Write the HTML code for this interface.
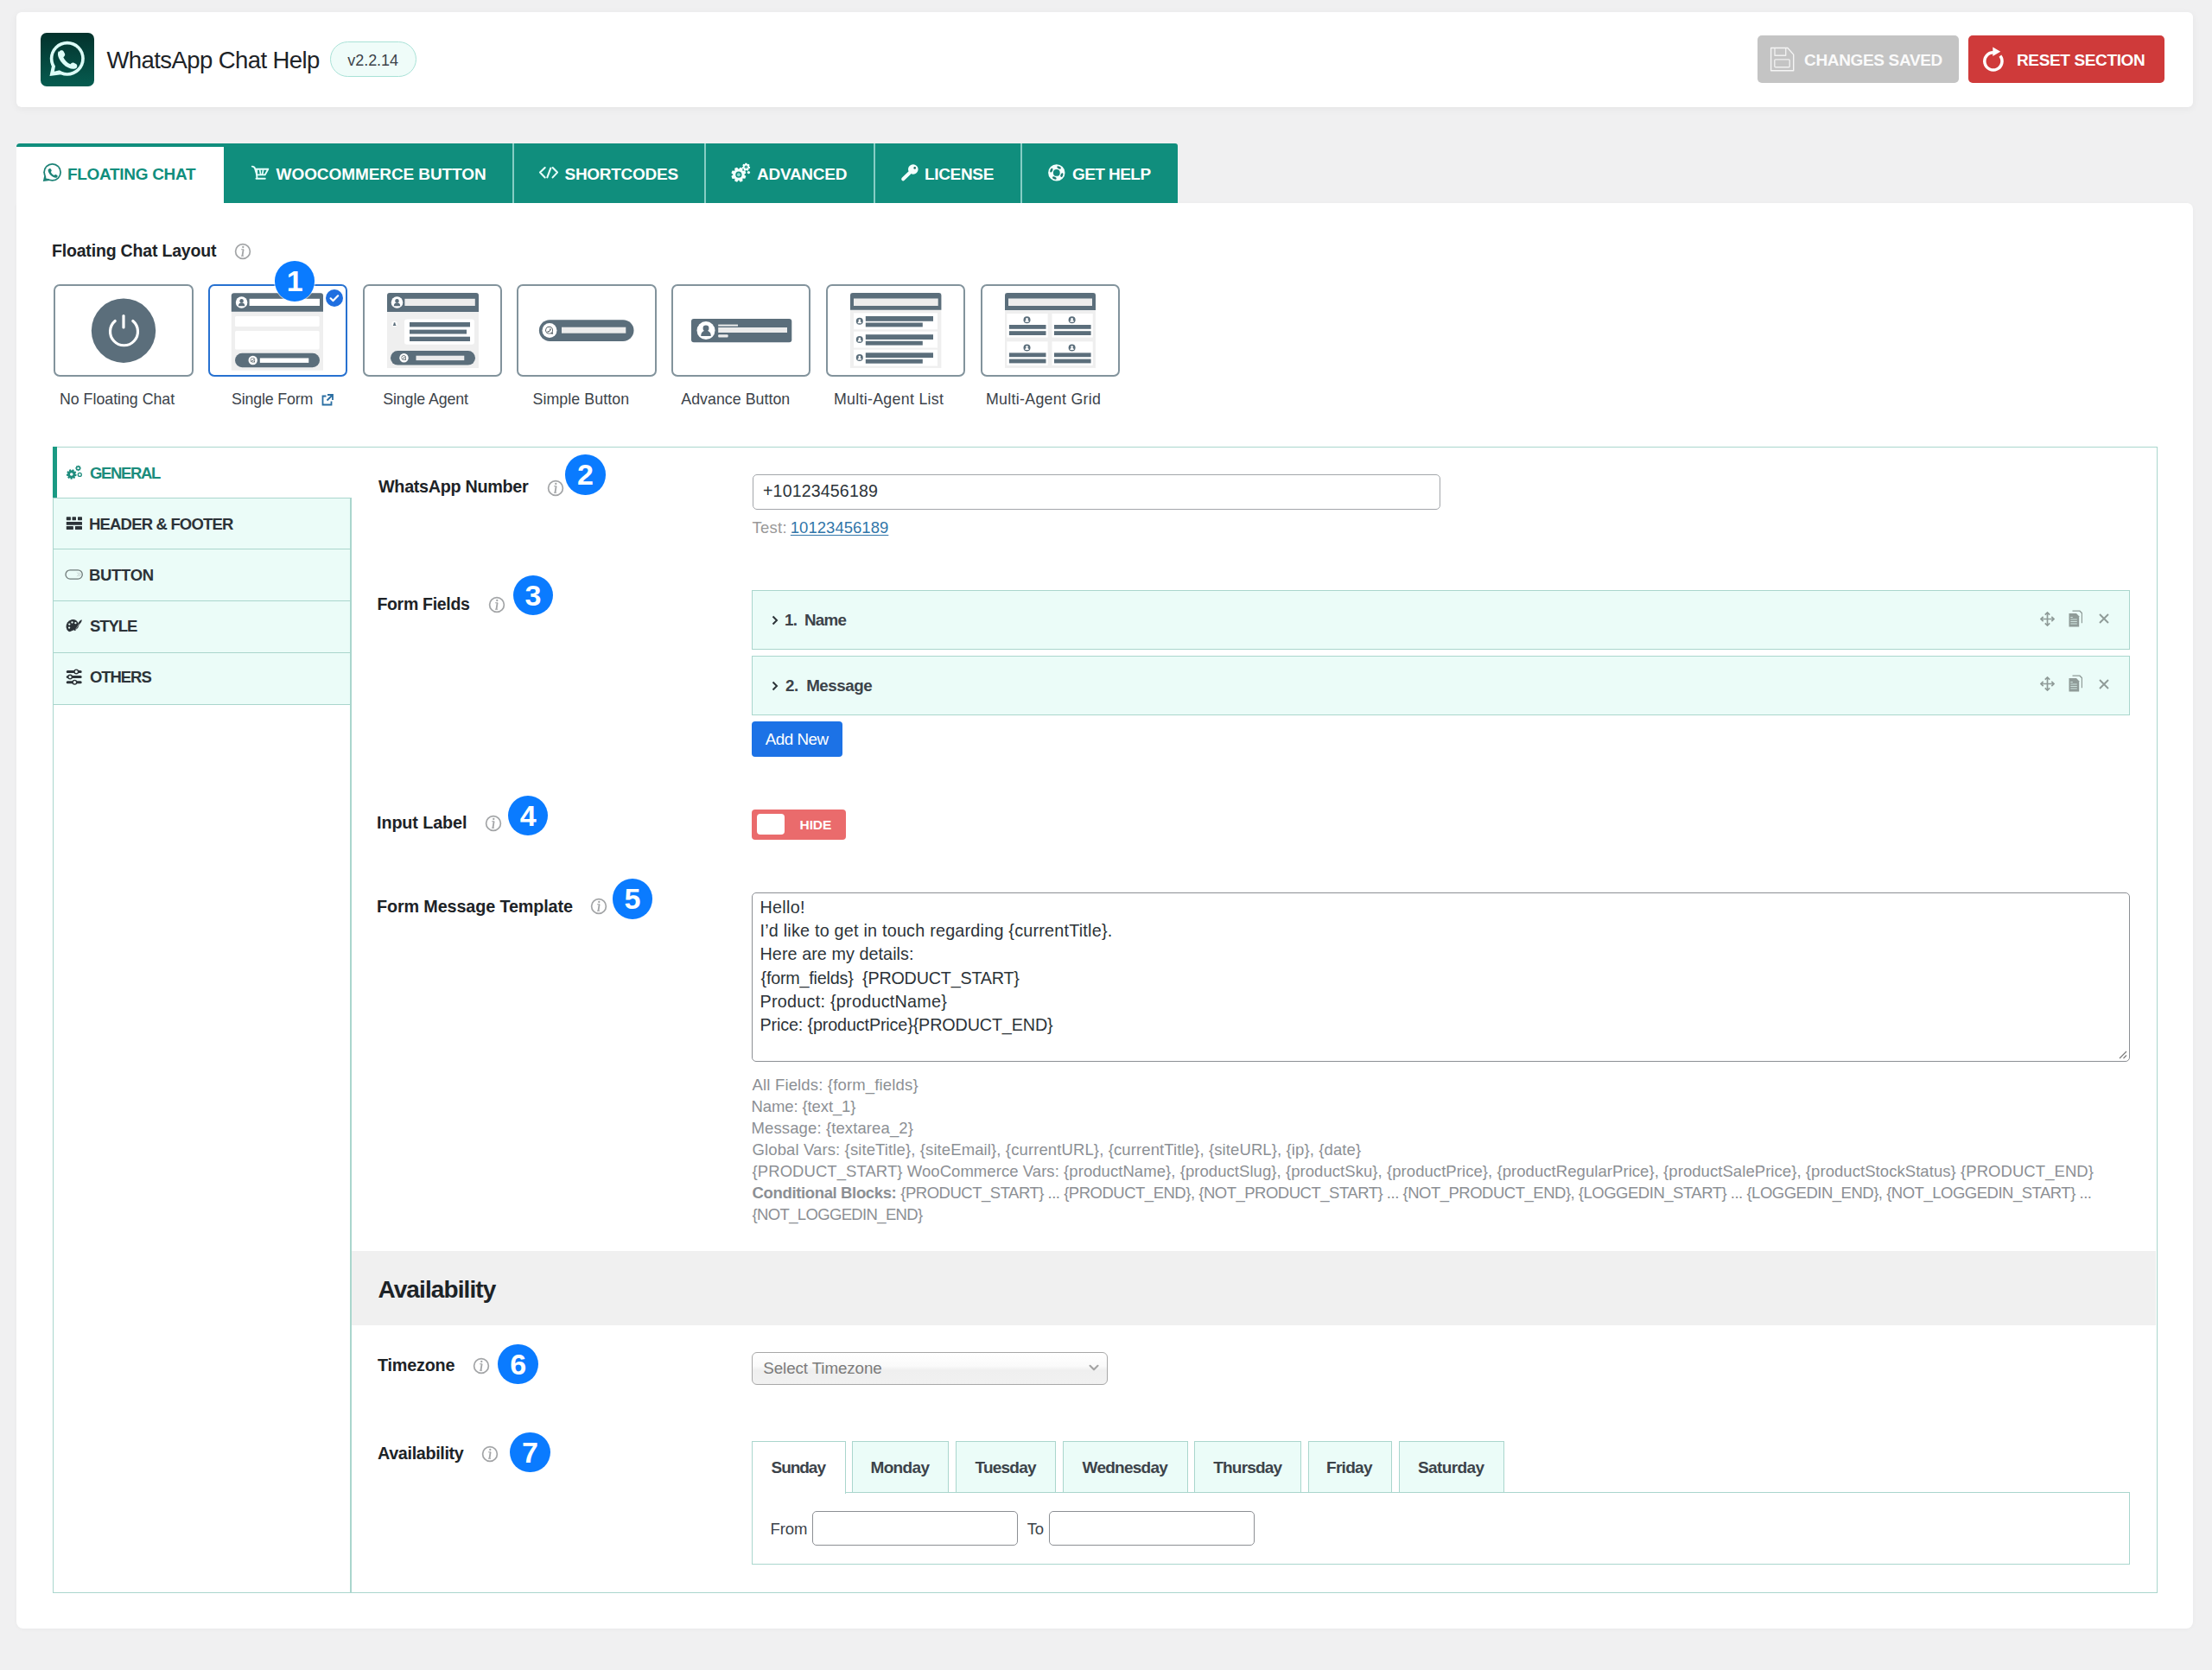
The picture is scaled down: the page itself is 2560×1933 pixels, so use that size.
<!DOCTYPE html><html><head><meta charset="utf-8"><title>WhatsApp Chat Help</title><style>
html,body{margin:0;padding:0}
body{width:2560px;height:1933px;background:#f0f0f1;position:relative;overflow:hidden;font-family:"Liberation Sans",sans-serif}
.t{position:absolute;line-height:1;white-space:pre}
.b{position:absolute;box-sizing:border-box}
</style></head><body>
<div class="b" style="left:19.0px;top:14.0px;width:2519.0px;height:110.0px;background:#fff;border-radius:6px;box-shadow:0 2px 10px rgba(0,0,0,0.05)"></div><div class="b" style="left:47.0px;top:38.0px;width:62.0px;height:62.0px;border-radius:7px;background:linear-gradient(180deg,#03322c 0%,#065c50 100%)"></div><svg class="b" style="left:44.0px;top:34.0px;" width="68.0" height="68.0" viewBox="0 0 1670 1670"><defs><mask id="wam"><rect width="1670" height="1670" fill="#000"/><circle cx="830" cy="830" r="492" fill="#fff"/><path d="M392 1040L332 1325 660 1282 600 1150z" fill="#fff"/><circle cx="830" cy="830" r="402" fill="#000"/><path d="M500 1000L462 1198 640 1155 560 1080z" fill="#000"/></mask></defs><rect width="1670" height="1670" fill="#dcfdf7" mask="url(#wam)"/><path d="M600 640c20-50 100-60 130-10l30 60c15 30 5 55-15 75l-25 25c40 90 110 160 200 200l25-25c20-20 45-30 75-15l60 30c50 30 40 110-10 130-60 25-130 20-200-15-120-55-220-155-275-275-35-70-40-140-15-200z" fill="#dcfdf7"/></svg><div class="t" style="left:123.50px;top:56.2px;font-size:27.5px;font-weight:400;color:#1d2327;letter-spacing:-0.588px;">WhatsApp Chat Help</div><div class="b" style="left:381.5px;top:48.0px;width:100.5px;height:41.0px;border:1.5px solid #a9e2d7;background:#effcf9;border-radius:21px"></div><div class="t" style="left:402.20px;top:60.7px;font-size:18px;font-weight:400;color:#3c434a;letter-spacing:-0.022px;">v2.2.14</div><div class="b" style="left:2034.0px;top:41.0px;width:233.0px;height:55.0px;background:#c4c4c4;border-radius:5px"></div><svg class="b" style="left:2040.0px;top:48.0px;" width="45.0" height="42.0" viewBox="2040 48 45 42"><path d="M2049.6 55.5H2068.9L2075.7 63.1V81.8H2049.6z" fill="none" stroke="#f5f5f5" stroke-width="1.4" stroke-linejoin="round"/><path d="M2054 55.5V64.3H2066.7V55.5" fill="none" stroke="#f0f0f0" stroke-width="1.4" stroke-linejoin="round"/><rect x="2053.8" y="68.9" width="17.4" height="8.9" rx="1" fill="none" stroke="#f0f0f0" stroke-width="1.4"/></svg><div class="t" style="left:2088.00px;top:59.9px;font-size:19px;font-weight:700;color:#fafafa;letter-spacing:-0.335px;">CHANGES SAVED</div><div class="b" style="left:2278.0px;top:41.0px;width:227.0px;height:55.0px;background:#cf3a3a;border-radius:5px"></div><svg class="b" style="left:2285.0px;top:48.0px;" width="45.0" height="42.0" viewBox="2285 48 45 42"><path d="M2306.90 60.80A10.1 10.1 0 1 0 2314.86 64.68" fill="none" stroke="#fff" stroke-width="3.5"/><path d="M2306.3 54.6L2315.2 59.8 2306.3 65z" fill="#fff"/></svg><div class="t" style="left:2334.00px;top:59.9px;font-size:19px;font-weight:700;color:#fff;letter-spacing:-0.363px;">RESET SECTION</div><div class="b" style="left:19.0px;top:235.0px;width:2519.0px;height:1650.0px;background:#fff;border-radius:0 7px 8px 8px;box-shadow:0 1px 5px rgba(0,0,0,0.03)"></div><div class="b" style="left:259.0px;top:166.0px;width:1104.0px;height:69.0px;background:#108e7d;border-top-right-radius:3px"></div><div class="b" style="left:19.0px;top:166.0px;width:240.0px;height:69.0px;background:#fff;border-top:4px solid #108e7d;border-top-left-radius:4px"></div><div class="b" style="left:592.5px;top:166.0px;width:2.0px;height:69.0px;background:#86cdc4"></div><div class="b" style="left:814.5px;top:166.0px;width:2.0px;height:69.0px;background:#86cdc4"></div><div class="b" style="left:1010.5px;top:166.0px;width:2.0px;height:69.0px;background:#86cdc4"></div><div class="b" style="left:1180.5px;top:166.0px;width:2.0px;height:69.0px;background:#86cdc4"></div><svg class="b" style="left:40.0px;top:180.0px;" width="40.0" height="40.0" viewBox="40 180 40 40"><defs><mask id="wam1"><rect x="39.8" y="178.6" width="41.6" height="41.6" fill="#000"/><circle cx="60.6" cy="199.4" r="10.4" fill="#fff"/><path d="M51.30 203.56 L49.78 210.11 L57.48 209.07 L55.92 205.85z" fill="#fff"/><circle cx="60.6" cy="199.4" r="8.6" fill="#000"/><path d="M53.12 202.84 L53.38 206.51 L56.40 206.91 L56.73 204.73z" fill="#000"/></mask></defs><rect x="39.8" y="178.6" width="41.6" height="41.6" fill="#1c8276" mask="url(#wam1)"/><path transform="translate(61.00 199.80) scale(0.02008) translate(-830 -830)" d="M600 640c20-50 100-60 130-10l30 60c15 30 5 55-15 75l-25 25c40 90 110 160 200 200l25-25c20-20 45-30 75-15l60 30c50 30 40 110-10 130-60 25-130 20-200-15-120-55-220-155-275-275-35-70-40-140-15-200z" fill="#1c8276"/></svg><div class="t" style="left:78.00px;top:191.7px;font-size:19px;font-weight:700;color:#108e7d;letter-spacing:-0.310px;">FLOATING CHAT</div><svg class="b" style="left:285.0px;top:185.0px;" width="30.0" height="28.0" viewBox="285 185 30 28"><path d="M291.8 192.6c1.6 0 2.6.6 3.2 2.2l2.3 7.6h9.4l3.6-6.7H295.5" fill="none" stroke="#e6fffb" stroke-width="1.9" stroke-linecap="round" stroke-linejoin="round"/><path d="M297.3 196v6.3M300.7 196.3l1 6M304.6 196.3l-1 6" stroke="#e6fffb" stroke-width="1.7"/><path d="M297.2 202.4l.2 4.4M296.5 206.8h10.3" fill="none" stroke="#e6fffb" stroke-width="1.9" stroke-linecap="round"/></svg><div class="t" style="left:319.60px;top:191.7px;font-size:19px;font-weight:700;color:#fff;letter-spacing:-0.082px;">WOOCOMMERCE BUTTON</div><svg class="b" style="left:618.0px;top:185.0px;" width="32.0" height="28.0" viewBox="618 185 32 28"><path d="M630.7 194L625 199.6l5.7 5.8M639.6 194l5.4 5.6-5.4 5.8M637.3 194.7l-4 10.6" fill="none" stroke="#e6fffb" stroke-width="2.1" stroke-linecap="round" stroke-linejoin="round"/></svg><div class="t" style="left:653.50px;top:191.7px;font-size:19px;font-weight:700;color:#fff;letter-spacing:-0.277px;">SHORTCODES</div><svg class="b" style="left:840.0px;top:185.0px;" width="35.0" height="30.0" viewBox="840 185 35 30"><path d="M861.30 202.31 L863.40 204.07 L862.26 206.84 L859.53 206.62 L859.35 206.80 L859.58 209.53 L856.82 210.69 L855.04 208.60 L854.79 208.60 L853.03 210.70 L850.26 209.56 L850.48 206.83 L850.30 206.65 L847.57 206.88 L846.41 204.12 L848.50 202.34 L848.50 202.09 L846.40 200.33 L847.54 197.56 L850.27 197.78 L850.45 197.60 L850.22 194.87 L852.98 193.71 L854.76 195.80 L855.01 195.80 L856.77 193.70 L859.54 194.84 L859.32 197.57 L859.50 197.75 L862.23 197.52 L863.39 200.28 L861.30 202.06z" fill="#f4fffd"/><circle cx="854.9" cy="202.2" r="3.6" fill="#108e7d"/><circle cx="854.9" cy="202.2" r="2.0" fill="#8fd6cc"/><path d="M866.91 192.51 L868.20 193.31 L867.83 195.12 L866.34 195.35 L866.24 195.48 L866.42 196.98 L864.78 197.82 L863.66 196.80 L863.51 196.80 L862.44 197.88 L860.76 197.12 L860.87 195.61 L860.77 195.49 L859.26 195.33 L858.81 193.54 L860.06 192.68 L860.09 192.53 L859.27 191.25 L860.38 189.78 L861.84 190.22 L861.98 190.15 L862.47 188.72 L864.31 188.67 L864.87 190.08 L865.01 190.14 L866.44 189.63 L867.62 191.05 L866.87 192.36z" fill="#f4fffd"/><circle cx="863.5" cy="193.3" r="1.7" fill="#108e7d"/><circle cx="863.5" cy="193.3" r="0.8" fill="#8fd6cc"/><circle cx="866.4" cy="199.6" r="1.7" fill="#e6fffb"/></svg><div class="t" style="left:876.00px;top:191.7px;font-size:19px;font-weight:700;color:#fff;letter-spacing:-0.263px;">ADVANCED</div><svg class="b" style="left:1035.0px;top:183.0px;" width="40.0" height="32.0" viewBox="1035 183 40 32"><circle cx="1056.8" cy="196" r="5.8" fill="#f4fffd"/><circle cx="1058.7" cy="194.4" r="1.3" fill="#1b6e64"/><path d="M1052.5 200.2L1045.2 207.3" stroke="#f4fffd" stroke-width="4" stroke-linecap="round"/></svg><div class="t" style="left:1070.00px;top:191.7px;font-size:19px;font-weight:700;color:#fff;letter-spacing:-0.329px;">LICENSE</div><svg class="b" style="left:1205.0px;top:183.0px;" width="40.0" height="32.0" viewBox="1205 183 40 32"><circle cx="1222.8" cy="199.9" r="9.7" fill="#f4fffd"/><circle cx="1222.8" cy="199.9" r="3.9" fill="#148a7d"/><ellipse cx="1225.59" cy="193.92" rx="2.5" ry="1.35" transform="rotate(25 1225.59 193.92)" fill="#1b7a6f"/><ellipse cx="1228.83" cy="202.58" rx="2.5" ry="1.35" transform="rotate(114 1228.83 202.58)" fill="#1b7a6f"/><ellipse cx="1220.33" cy="206.02" rx="2.5" ry="1.35" transform="rotate(202 1220.33 206.02)" fill="#1b7a6f"/><ellipse cx="1216.82" cy="197.11" rx="2.5" ry="1.35" transform="rotate(295 1216.82 197.11)" fill="#1b7a6f"/></svg><div class="t" style="left:1241.00px;top:191.7px;font-size:19px;font-weight:700;color:#fff;letter-spacing:-0.562px;">GET HELP</div><div class="t" style="left:60.00px;top:281.4px;font-size:19.5px;font-weight:700;color:#1d2327;letter-spacing:-0.180px;">Floating Chat Layout</div><svg class="b" style="left:271.4px;top:281.0px;" width="20.0" height="20.0" viewBox="0 0 20 20"><circle cx="10" cy="10" r="8.4" fill="none" stroke="#a3a5a7" stroke-width="1.7"/><circle cx="10.3" cy="5.0" r="1.15" fill="#a3a5a7"/><path d="M10.6 7.8L9.5 15.2" stroke="#a3a5a7" stroke-width="1.8"/><path d="M8.1 7.8H11.2M8.0 15.2H11.0" stroke="#a3a5a7" stroke-width="1.1"/></svg><div class="b" style="left:62.0px;top:329.3px;width:161.6px;height:106.7px;border:2.7px solid #82939c;border-radius:7px;background:#fff"></div><div class="b" style="left:240.6px;top:329.3px;width:161.6px;height:106.7px;border:2.7px solid #2771d0;border-radius:7px;background:#fff"></div><div class="b" style="left:419.6px;top:329.3px;width:161.6px;height:106.7px;border:2.7px solid #82939c;border-radius:7px;background:#fff"></div><div class="b" style="left:598.0px;top:329.3px;width:161.6px;height:106.7px;border:2.7px solid #82939c;border-radius:7px;background:#fff"></div><div class="b" style="left:776.8px;top:329.3px;width:161.6px;height:106.7px;border:2.7px solid #82939c;border-radius:7px;background:#fff"></div><div class="b" style="left:955.5px;top:329.3px;width:161.6px;height:106.7px;border:2.7px solid #82939c;border-radius:7px;background:#fff"></div><div class="b" style="left:1134.5px;top:329.3px;width:161.6px;height:106.7px;border:2.7px solid #82939c;border-radius:7px;background:#fff"></div><svg class="b" style="left:0.0px;top:0.0px;" width="1400.0" height="500.0" viewBox="0 0 1400 500"><circle cx="143" cy="382.7" r="37.2" fill="#5b6e7b"/><path d="M133.2 371.5a16 16 0 1 0 20.6 0" fill="none" stroke="#fff" stroke-width="3.2" stroke-linecap="round"/><path d="M143 365.5v13.5" stroke="#fff" stroke-width="3.2" stroke-linecap="round"/><path d="M267.8 342.3a3 3 0 0 1 3-3h100.2a3 3 0 0 1 3 3v86.5h-106.2z" fill="#efefef"/><path d="M267.8 342.3a3 3 0 0 1 3-3h100.2a3 3 0 0 1 3 3v18.5h-106.2z" fill="#5b6e7b"/><circle cx="279.6" cy="350" r="6.8" fill="#fff"/><circle cx="279.6" cy="348.3" r="2.244" fill="#5b6e7b"/><path d="M275.86 354.216c0-3.06 1.7-4.08 3.74-4.08s3.74 1.02 3.74 4.08z" fill="#5b6e7b"/><rect x="288.6" y="345.8" width="81.4" height="8.2" fill="#fff"/><rect x="272" y="366" width="97.6" height="12" rx="1.5" fill="#fff"/><rect x="272" y="383" width="97.6" height="21.4" rx="1.5" fill="#fff"/><rect x="272" y="408.8" width="98" height="16.4" rx="8.2" fill="#5b6e7b"/><circle cx="292.7" cy="417" r="5.2" fill="#fff"/><g transform="translate(585.40 0) scale(-1 1)"><defs><mask id="wam2"><rect x="287.55199999999996" y="411.332" width="10.816" height="10.816" fill="#000"/><circle cx="292.96" cy="416.74" r="2.704" fill="#fff"/><path d="M290.54 417.82 L290.15 419.53 L292.15 419.25 L291.74 418.42z" fill="#fff"/><circle cx="292.96" cy="416.74" r="2.132" fill="#000"/><path d="M291.11 417.59 L291.29 418.38 L291.81 418.57 L292.00 418.06z" fill="#000"/></mask></defs><rect x="287.55199999999996" y="411.332" width="10.816" height="10.816" fill="#4f5a60" mask="url(#wam2)"/><path transform="translate(292.96 416.74) scale(0.00495) translate(-830 -830)" d="M600 640c20-50 100-60 130-10l30 60c15 30 5 55-15 75l-25 25c40 90 110 160 200 200l25-25c20-20 45-30 75-15l60 30c50 30 40 110-10 130-60 25-130 20-200-15-120-55-220-155-275-275-35-70-40-140-15-200z" fill="#4f5a60"/></g><rect x="300.8" y="414.5" width="56.5" height="5.4" fill="#fff"/><path d="M448 342a3 3 0 0 1 3-3h100a3 3 0 0 1 3 3v83.9h-106z" fill="#efefef"/><path d="M448 342a3 3 0 0 1 3-3h100a3 3 0 0 1 3 3v19h-106z" fill="#5b6e7b"/><circle cx="459.5" cy="350" r="6.8" fill="#fff"/><circle cx="459.5" cy="348.3" r="2.244" fill="#5b6e7b"/><path d="M455.76 354.216c0-3.06 1.7-4.08 3.74-4.08s3.74 1.02 3.74 4.08z" fill="#5b6e7b"/><rect x="468.4" y="345.8" width="81.4" height="8.2" fill="#ececec"/><rect x="468" y="369.4" width="81" height="29.3" rx="3" fill="#fff"/><circle cx="456.6" cy="375" r="3.2" fill="#fff"/><circle cx="456.6" cy="374.2" r="1.056" fill="#5b6e7b"/><path d="M454.84000000000003 376.984c0-1.4400000000000002 0.8-1.92 1.7600000000000002-1.92s1.7600000000000002 0.48 1.7600000000000002 1.92z" fill="#5b6e7b"/><rect x="474" y="373" width="70" height="5.4" fill="#5b6e7b"/><rect x="474" y="381.6" width="66" height="4.9" fill="#5b6e7b"/><rect x="474" y="389.7" width="70" height="5.3" fill="#5b6e7b"/><rect x="452" y="406" width="98" height="16.6" rx="8.3" fill="#5b6e7b"/><circle cx="467.5" cy="414.3" r="5.2" fill="#fff"/><g transform="translate(935.00 0) scale(-1 1)"><defs><mask id="wam3"><rect x="462.352" y="408.632" width="10.816" height="10.816" fill="#000"/><circle cx="467.76" cy="414.04" r="2.704" fill="#fff"/><path d="M465.34 415.12 L464.95 416.83 L466.95 416.55 L466.54 415.72z" fill="#fff"/><circle cx="467.76" cy="414.04" r="2.132" fill="#000"/><path d="M465.91 414.89 L466.09 415.68 L466.61 415.87 L466.80 415.36z" fill="#000"/></mask></defs><rect x="462.352" y="408.632" width="10.816" height="10.816" fill="#4f5a60" mask="url(#wam3)"/><path transform="translate(467.76 414.04) scale(0.00495) translate(-830 -830)" d="M600 640c20-50 100-60 130-10l30 60c15 30 5 55-15 75l-25 25c40 90 110 160 200 200l25-25c20-20 45-30 75-15l60 30c50 30 40 110-10 130-60 25-130 20-200-15-120-55-220-155-275-275-35-70-40-140-15-200z" fill="#4f5a60"/></g><rect x="481.5" y="411.7" width="55.8" height="5.4" fill="#ececec"/><rect x="623.9" y="370.2" width="109.6" height="24.8" rx="12.4" fill="#5b6e7b"/><circle cx="636" cy="382.6" r="8.5" fill="#fff"/><g transform="translate(1272.00 0) scale(-1 1)"><defs><mask id="wam4"><rect x="627.5849999999999" y="373.33500000000004" width="17.68" height="17.68" fill="#000"/><circle cx="636.425" cy="382.175" r="4.42" fill="#fff"/><path d="M632.47 383.94 L631.83 386.73 L635.10 386.29 L634.44 384.92z" fill="#fff"/><circle cx="636.425" cy="382.175" r="3.485" fill="#000"/><path d="M633.40 383.57 L633.70 384.86 L634.54 385.16 L634.86 384.34z" fill="#000"/></mask></defs><rect x="627.5849999999999" y="373.33500000000004" width="17.68" height="17.68" fill="#4f5a60" mask="url(#wam4)"/><path transform="translate(636.42 382.18) scale(0.00809) translate(-830 -830)" d="M600 640c20-50 100-60 130-10l30 60c15 30 5 55-15 75l-25 25c40 90 110 160 200 200l25-25c20-20 45-30 75-15l60 30c50 30 40 110-10 130-60 25-130 20-200-15-120-55-220-155-275-275-35-70-40-140-15-200z" fill="#4f5a60"/></g><rect x="650" y="378.7" width="74.3" height="7" fill="#ececec"/><rect x="800" y="369" width="116.3" height="27.3" rx="3" fill="#5b6e7b"/><circle cx="817" cy="382.6" r="10.5" fill="#fff"/><circle cx="817" cy="379.975" r="3.4650000000000003" fill="#5b6e7b"/><path d="M811.225 389.11c0-4.7250000000000005 2.625-6.3 5.775-6.3s5.775 1.575 5.775 6.3z" fill="#5b6e7b"/><rect x="831.2" y="375.6" width="22.8" height="2" fill="#ececec"/><rect x="831.2" y="379" width="79.8" height="6" fill="#ececec"/><rect x="831.2" y="387.3" width="11.4" height="3.3" rx="1" fill="#ececec"/><rect x="984" y="339" width="105.4" height="86.9" fill="#efefef"/><path d="M984 342a3 3 0 0 1 3-3h99.4a3 3 0 0 1 3 3v16.8h-105.4z" fill="#5b6e7b"/><rect x="988" y="345.5" width="97.7" height="8.5" fill="#ececec"/><rect x="988" y="362.4" width="97" height="18.9" fill="#fff"/><circle cx="994.8" cy="371.8" r="4" fill="#5b6e7b"/><circle cx="994.8" cy="370.8" r="1.32" fill="#fff"/><path d="M992.5999999999999 374.28000000000003c0-1.8 1.0-2.4 2.2-2.4s2.2 0.6 2.2 2.4z" fill="#fff"/><rect x="1001.8" y="366" width="78.2" height="5.8" fill="#5b6e7b"/><rect x="1001.8" y="373.5" width="66" height="4.9" fill="#5b6e7b"/><rect x="988" y="383.59999999999997" width="97" height="18.9" fill="#fff"/><circle cx="994.8" cy="393.0" r="4" fill="#5b6e7b"/><circle cx="994.8" cy="392.0" r="1.32" fill="#fff"/><path d="M992.5999999999999 395.48c0-1.8 1.0-2.4 2.2-2.4s2.2 0.6 2.2 2.4z" fill="#fff"/><rect x="1001.8" y="387.2" width="78.2" height="5.8" fill="#5b6e7b"/><rect x="1001.8" y="394.7" width="66" height="4.9" fill="#5b6e7b"/><rect x="988" y="404.7" width="97" height="18.9" fill="#fff"/><circle cx="994.8" cy="414.1" r="4" fill="#5b6e7b"/><circle cx="994.8" cy="413.1" r="1.32" fill="#fff"/><path d="M992.5999999999999 416.58000000000004c0-1.8 1.0-2.4 2.2-2.4s2.2 0.6 2.2 2.4z" fill="#fff"/><rect x="1001.8" y="408.3" width="78.2" height="5.8" fill="#5b6e7b"/><rect x="1001.8" y="415.8" width="66" height="4.9" fill="#5b6e7b"/><rect x="1163" y="339" width="105" height="86.9" fill="#efefef"/><path d="M1163 342a3 3 0 0 1 3-3h99a3 3 0 0 1 3 3v17h-105z" fill="#5b6e7b"/><rect x="1167" y="345.5" width="97" height="8.5" fill="#ececec"/><rect x="1165.4" y="363" width="47.2" height="27.6" fill="#fff"/><circle cx="1188.5" cy="370.2" r="4" fill="#5b6e7b"/><circle cx="1188.5" cy="369.2" r="1.32" fill="#fff"/><path d="M1186.3 372.68c0-1.8 1.0-2.4 2.2-2.4s2.2 0.6 2.2 2.4z" fill="#fff"/><rect x="1167.9" y="376" width="42.6" height="4.8" fill="#5b6e7b"/><rect x="1167.9" y="383.2" width="42.6" height="4.8" fill="#5b6e7b"/><rect x="1165.4" y="395.4" width="47.2" height="27.6" fill="#fff"/><circle cx="1188.5" cy="402.59999999999997" r="4" fill="#5b6e7b"/><circle cx="1188.5" cy="401.59999999999997" r="1.32" fill="#fff"/><path d="M1186.3 405.08c0-1.8 1.0-2.4 2.2-2.4s2.2 0.6 2.2 2.4z" fill="#fff"/><rect x="1167.9" y="408.4" width="42.6" height="4.8" fill="#5b6e7b"/><rect x="1167.9" y="415.59999999999997" width="42.6" height="4.8" fill="#5b6e7b"/><rect x="1217.5" y="363" width="47.2" height="27.6" fill="#fff"/><circle cx="1240.6" cy="370.2" r="4" fill="#5b6e7b"/><circle cx="1240.6" cy="369.2" r="1.32" fill="#fff"/><path d="M1238.3999999999999 372.68c0-1.8 1.0-2.4 2.2-2.4s2.2 0.6 2.2 2.4z" fill="#fff"/><rect x="1220.0" y="376" width="42.6" height="4.8" fill="#5b6e7b"/><rect x="1220.0" y="383.2" width="42.6" height="4.8" fill="#5b6e7b"/><rect x="1217.5" y="395.4" width="47.2" height="27.6" fill="#fff"/><circle cx="1240.6" cy="402.59999999999997" r="4" fill="#5b6e7b"/><circle cx="1240.6" cy="401.59999999999997" r="1.32" fill="#fff"/><path d="M1238.3999999999999 405.08c0-1.8 1.0-2.4 2.2-2.4s2.2 0.6 2.2 2.4z" fill="#fff"/><rect x="1220.0" y="408.4" width="42.6" height="4.8" fill="#5b6e7b"/><rect x="1220.0" y="415.59999999999997" width="42.6" height="4.8" fill="#5b6e7b"/></svg><svg class="b" style="left:376.7px;top:334.7px;" width="20.0" height="20.0" viewBox="0 0 20 20"><circle cx="10" cy="10" r="10" fill="#1f6fe0"/><path d="M5.6 10.3l3 2.8 5.6-5.8" fill="none" stroke="#fff" stroke-width="2.2" stroke-linecap="round" stroke-linejoin="round"/></svg><div class="b" style="left:317.9px;top:302.3px;width:46.4px;height:46.4px;background:#0a7bff;border-radius:50%;box-shadow:0 0 0 1px rgba(255,255,255,0.6)"></div><div class="t" style="left:317.9px;top:302.3px;width:46.4px;height:46.4px;line-height:46.4px;text-align:center;font-size:34px;font-weight:700;color:#fff">1</div><div class="t" style="left:69.00px;top:453.7px;font-size:17.8px;font-weight:400;color:#3c434a;letter-spacing:-0.019px;">No Floating Chat</div><div class="t" style="left:268.00px;top:453.7px;font-size:17.8px;font-weight:400;color:#3c434a;letter-spacing:-0.154px;">Single Form</div><svg class="b" style="left:370.5px;top:455.3px;" width="16.0" height="16.0" viewBox="0 0 16 16"><path d="M6.5 3.5H2.5v10h10v-4" fill="none" stroke="#2a6ea2" stroke-width="1.8"/><path d="M8 2h6v6M14 2L7.5 8.5" fill="none" stroke="#2a6ea2" stroke-width="1.8"/></svg><div class="t" style="left:443.20px;top:453.7px;font-size:17.8px;font-weight:400;color:#3c434a;letter-spacing:-0.090px;">Single Agent</div><div class="t" style="left:616.50px;top:453.7px;font-size:17.8px;font-weight:400;color:#3c434a;letter-spacing:0.074px;">Simple Button</div><div class="t" style="left:788.30px;top:453.7px;font-size:17.8px;font-weight:400;color:#3c434a;letter-spacing:0.026px;">Advance Button</div><div class="t" style="left:965.00px;top:453.7px;font-size:17.8px;font-weight:400;color:#3c434a;letter-spacing:0.293px;">Multi-Agent List</div><div class="t" style="left:1141.00px;top:453.7px;font-size:17.8px;font-weight:400;color:#3c434a;letter-spacing:0.295px;">Multi-Agent Grid</div><div class="b" style="left:61.0px;top:517.0px;width:2435.5px;height:1326.5px;border:1.5px solid #aad6cd"></div><div class="b" style="left:62.5px;top:518.5px;width:343.0px;height:57.2px;background:#fff"></div><div class="b" style="left:61.0px;top:517.0px;width:4.6px;height:59.0px;background:#1a9a83"></div><div class="b" style="left:61.0px;top:575.7px;width:345.0px;height:61.2px;background:#ebfcf8;border-top:1.5px solid #aad6cd;border-bottom:1.5px solid #aad6cd;border-left:1.5px solid #aad6cd"></div><div class="b" style="left:61.0px;top:635.4px;width:345.0px;height:61.5px;background:#ebfcf8;border-top:1.5px solid #aad6cd;border-bottom:1.5px solid #aad6cd;border-left:1.5px solid #aad6cd"></div><div class="b" style="left:61.0px;top:695.4px;width:345.0px;height:60.6px;background:#ebfcf8;border-top:1.5px solid #aad6cd;border-bottom:1.5px solid #aad6cd;border-left:1.5px solid #aad6cd"></div><div class="b" style="left:61.0px;top:754.5px;width:345.0px;height:61.5px;background:#ebfcf8;border-top:1.5px solid #aad6cd;border-bottom:1.5px solid #aad6cd;border-left:1.5px solid #aad6cd"></div><div class="b" style="left:405.0px;top:575.7px;width:1.5px;height:1267.8px;background:#aad6cd"></div><svg class="b" style="left:70.0px;top:530.0px;" width="30.0" height="30.0" viewBox="70 530 30 30"><path d="M87.01 548.44 L88.64 549.27 L88.29 551.04 L86.46 551.18 L86.38 551.31 L87.09 553.00 L85.68 554.12 L84.19 553.05 L84.05 553.10 L83.50 554.85 L81.70 554.81 L81.25 553.03 L81.11 552.97 L79.57 553.97 L78.21 552.77 L79.01 551.12 L78.94 550.99 L77.12 550.76 L76.85 548.97 L78.52 548.22 L78.55 548.07 L77.31 546.73 L78.25 545.19 L80.01 545.68 L80.13 545.59 L80.04 543.76 L81.75 543.19 L82.78 544.70 L82.93 544.70 L84.04 543.24 L85.72 543.90 L85.54 545.73 L85.65 545.83 L87.44 545.42 L88.30 547.01 L86.99 548.29z" fill="#1e8c7d"/><circle cx="82.75" cy="549" r="1.8" fill="#fff"/><path d="M92.83 540.99 L93.75 541.33 L93.75 542.47 L92.83 542.81 L92.79 542.90 L93.20 543.80 L92.40 544.60 L91.50 544.19 L91.41 544.23 L91.07 545.15 L89.93 545.15 L89.59 544.23 L89.50 544.19 L88.60 544.60 L87.80 543.80 L88.21 542.90 L88.17 542.81 L87.25 542.47 L87.25 541.33 L88.17 540.99 L88.21 540.90 L87.80 540.00 L88.60 539.20 L89.50 539.61 L89.59 539.57 L89.93 538.65 L91.07 538.65 L91.41 539.57 L91.50 539.61 L92.40 539.20 L93.20 540.00 L92.79 540.90z" fill="#1e8c7d"/><circle cx="90.5" cy="541.9" r="1.2" fill="#fff"/><circle cx="92.3" cy="549.4" r="2.0" fill="none" stroke="#1e8c7d" stroke-width="1.3"/></svg><div class="t" style="left:104.00px;top:538.8px;font-size:18.5px;font-weight:700;color:#1a8c7c;letter-spacing:-1.358px;">GENERAL</div><svg class="b" style="left:70.0px;top:590.0px;" width="30.0" height="30.0" viewBox="70 590 30 30"><g fill="#2c3338"><rect x="76.8" y="598.3" width="5.1" height="3.9" rx="0.6"/><rect x="83.5" y="598.3" width="4.5" height="3.9" rx="0.6"/><rect x="90" y="598.3" width="5" height="3.9" rx="0.6"/><rect x="76.8" y="604" width="18.2" height="3.8" rx="0.6"/><rect x="76.8" y="609" width="8.1" height="4" rx="0.6"/><rect x="86.9" y="609" width="8.1" height="4" rx="0.6"/></g></svg><div class="t" style="left:103.00px;top:597.7px;font-size:18.5px;font-weight:700;color:#2c3338;letter-spacing:-0.820px;">HEADER &amp; FOOTER</div><svg class="b" style="left:70.0px;top:650.0px;" width="30.0" height="30.0" viewBox="70 650 30 30"><rect x="76" y="659.8" width="19.3" height="10.3" rx="5.15" fill="none" stroke="#6f7a78" stroke-width="1.3"/><path d="M89.2 662.6l2.2 2.3-2.2 2.3M91.3 662.6l2.2 2.3-2.2 2.3" fill="none" stroke="#b9c2c0" stroke-width="0.8"/></svg><div class="t" style="left:103.00px;top:656.7px;font-size:18.5px;font-weight:700;color:#2c3338;letter-spacing:-0.315px;">BUTTON</div><svg class="b" style="left:70.0px;top:710.0px;" width="30.0" height="30.0" viewBox="70 710 30 30"><defs><mask id="palm"><rect x="70" y="710" width="30" height="30" fill="#fff"/><path d="M96.5 716.5L86.5 732.5" stroke="#000" stroke-width="3.2" stroke-linecap="round"/></mask></defs><ellipse cx="83.65" cy="724.4" rx="6.9" ry="7.7" transform="rotate(35 83.65 724.4)" fill="#2c3338" mask="url(#palm)"/><g fill="#ecfcf8"><circle cx="83.5" cy="720.4" r="1.15"/><circle cx="87.4" cy="721.2" r="1.15"/><circle cx="80.3" cy="722.6" r="1.15"/><circle cx="80.1" cy="726.6" r="1.15"/></g><path d="M94.6 717.2c.4 1.6-.6 3.2-1.8 4.6L87 730.3l-1.6-1 5.5-8.9c.9-1.4 2.2-2.8 3.7-3.2z" fill="#2c3338"/><path d="M91.8 721.8L87.3 728.8" stroke="#c8d0ce" stroke-width="0.6"/></svg><div class="t" style="left:104.00px;top:716.3px;font-size:18.5px;font-weight:700;color:#2c3338;letter-spacing:-1.070px;">STYLE</div><svg class="b" style="left:70.0px;top:769.0px;" width="30.0" height="30.0" viewBox="70 769 30 30"><g stroke="#2c3338" stroke-width="3" stroke-linecap="round"><path d="M78.2 777.4h15M78.2 783.5h15M78.2 789.7h15"/></g><g fill="#ecfcf8" stroke="#2c3338" stroke-width="1.4"><circle cx="88.3" cy="777.4" r="2.3"/><circle cx="81.1" cy="783.5" r="2.3"/><circle cx="86.4" cy="789.7" r="2.3"/></g></svg><div class="t" style="left:104.00px;top:775.3px;font-size:18.5px;font-weight:700;color:#2c3338;letter-spacing:-1.070px;">OTHERS</div><div class="t" style="left:438.00px;top:554.0px;font-size:19.8px;font-weight:700;color:#1d2327;letter-spacing:-0.310px;">WhatsApp Number</div><svg class="b" style="left:632.7px;top:555.4px;" width="20.0" height="20.0" viewBox="0 0 20 20"><circle cx="10" cy="10" r="8.4" fill="none" stroke="#a3a5a7" stroke-width="1.7"/><circle cx="10.3" cy="5.0" r="1.15" fill="#a3a5a7"/><path d="M10.6 7.8L9.5 15.2" stroke="#a3a5a7" stroke-width="1.8"/><path d="M8.1 7.8H11.2M8.0 15.2H11.0" stroke="#a3a5a7" stroke-width="1.1"/></svg><div class="b" style="left:654.3px;top:526.4px;width:46.4px;height:46.4px;background:#0a7bff;border-radius:50%;box-shadow:0 0 0 1px rgba(255,255,255,0.6)"></div><div class="t" style="left:654.3px;top:526.4px;width:46.4px;height:46.4px;line-height:46.4px;text-align:center;font-size:34px;font-weight:700;color:#fff">2</div><div class="b" style="left:870.6px;top:548.5px;width:796.6px;height:41.0px;border:1.4px solid #a3a6aa;border-radius:5px;background:#fff"></div><div class="t" style="left:883.00px;top:558.8px;font-size:19.6px;font-weight:400;color:#2c3338;letter-spacing:0.144px;">+10123456189</div><div class="t" style="left:870.60px;top:601.9px;font-size:18.5px;font-weight:400;color:#999999;letter-spacing:0.243px;">Test:</div><div class="t" style="left:914.80px;top:601.9px;font-size:18.5px;font-weight:400;color:#3176a9;letter-spacing:0.031px;text-decoration:underline;text-underline-offset:2px">10123456189</div><div class="t" style="left:436.40px;top:689.6px;font-size:19.5px;font-weight:700;color:#1d2327;letter-spacing:-0.307px;">Form Fields</div><svg class="b" style="left:565.0px;top:689.6px;" width="20.0" height="20.0" viewBox="0 0 20 20"><circle cx="10" cy="10" r="8.4" fill="none" stroke="#a3a5a7" stroke-width="1.7"/><circle cx="10.3" cy="5.0" r="1.15" fill="#a3a5a7"/><path d="M10.6 7.8L9.5 15.2" stroke="#a3a5a7" stroke-width="1.8"/><path d="M8.1 7.8H11.2M8.0 15.2H11.0" stroke="#a3a5a7" stroke-width="1.1"/></svg><div class="b" style="left:593.8px;top:665.8px;width:46.4px;height:46.4px;background:#0a7bff;border-radius:50%;box-shadow:0 0 0 1px rgba(255,255,255,0.6)"></div><div class="t" style="left:593.8px;top:665.8px;width:46.4px;height:46.4px;line-height:46.4px;text-align:center;font-size:34px;font-weight:700;color:#fff">3</div><div class="b" style="left:870.3px;top:683.2px;width:1594.3px;height:68.4px;background:#ebfcf8;border:1.5px solid #aad6cd"></div><svg class="b" style="left:892.0px;top:711.0px;" width="10.0" height="14.0" viewBox="0 0 10 14"><path d="M2.5 2.5l4.5 4.5-4.5 4.5" fill="none" stroke="#2c3338" stroke-width="2"/></svg><div class="t" style="left:908.00px;top:709.0px;font-size:18.8px;font-weight:700;color:#3c434a;letter-spacing:-0.758px;">1.  Name</div><svg class="b" style="left:2360.5px;top:707.5px;" width="17.0" height="17.0" viewBox="0 0 17 17"><path d="M8.5 1v15M1 8.5h15" stroke="#8f9b98" stroke-width="1.7"/><path d="M5.8 3.7L8.5 1l2.7 2.7M5.8 13.3l2.7 2.7 2.7-2.7M3.7 5.8L1 8.5l2.7 2.7M13.3 5.8L16 8.5l-2.7 2.7" fill="none" stroke="#8f9b98" stroke-width="1.7"/></svg><svg class="b" style="left:2393.8px;top:705.5px;" width="16.2" height="20.0" viewBox="0 0 16.2 20"><path d="M4.5 1.2h8.5l2.5 2.5v11.5" fill="none" stroke="#8f9b98" stroke-width="1.3"/><path d="M0.5 4h8.5l3.2 3.2v12.3H0.5z" fill="#8f9b98"/><path d="M2.3 8.5h2.5M2.3 11h7.5M2.3 13.5h7.5M2.3 16h7.5" stroke="#dff5f0" stroke-width="0.8"/></svg><svg class="b" style="left:2429.4px;top:710.0px;" width="12.0" height="12.0" viewBox="0 0 12 12"><path d="M1 1l10 10M11 1L1 11" stroke="#8f9b98" stroke-width="1.9"/></svg><div class="b" style="left:870.3px;top:759.0px;width:1594.3px;height:68.6px;background:#ebfcf8;border:1.5px solid #aad6cd"></div><svg class="b" style="left:892.0px;top:786.9px;" width="10.0" height="14.0" viewBox="0 0 10 14"><path d="M2.5 2.5l4.5 4.5-4.5 4.5" fill="none" stroke="#2c3338" stroke-width="2"/></svg><div class="t" style="left:909.00px;top:784.9px;font-size:18.8px;font-weight:700;color:#3c434a;letter-spacing:-0.480px;">2.  Message</div><svg class="b" style="left:2360.5px;top:783.4px;" width="17.0" height="17.0" viewBox="0 0 17 17"><path d="M8.5 1v15M1 8.5h15" stroke="#8f9b98" stroke-width="1.7"/><path d="M5.8 3.7L8.5 1l2.7 2.7M5.8 13.3l2.7 2.7 2.7-2.7M3.7 5.8L1 8.5l2.7 2.7M13.3 5.8L16 8.5l-2.7 2.7" fill="none" stroke="#8f9b98" stroke-width="1.7"/></svg><svg class="b" style="left:2393.8px;top:781.4px;" width="16.2" height="20.0" viewBox="0 0 16.2 20"><path d="M4.5 1.2h8.5l2.5 2.5v11.5" fill="none" stroke="#8f9b98" stroke-width="1.3"/><path d="M0.5 4h8.5l3.2 3.2v12.3H0.5z" fill="#8f9b98"/><path d="M2.3 8.5h2.5M2.3 11h7.5M2.3 13.5h7.5M2.3 16h7.5" stroke="#dff5f0" stroke-width="0.8"/></svg><svg class="b" style="left:2429.4px;top:785.9px;" width="12.0" height="12.0" viewBox="0 0 12 12"><path d="M1 1l10 10M11 1L1 11" stroke="#8f9b98" stroke-width="1.9"/></svg><div class="b" style="left:870.3px;top:835.0px;width:105.0px;height:40.8px;background:#1c72e6;border-radius:4px"></div><div class="t" style="left:885.80px;top:846.5px;font-size:18.8px;font-weight:400;color:#fff;letter-spacing:-0.491px;">Add New</div><div class="t" style="left:436.00px;top:943.4px;font-size:19.8px;font-weight:700;color:#1d2327;letter-spacing:-0.100px;">Input Label</div><svg class="b" style="left:560.5px;top:942.9px;" width="20.0" height="20.0" viewBox="0 0 20 20"><circle cx="10" cy="10" r="8.4" fill="none" stroke="#a3a5a7" stroke-width="1.7"/><circle cx="10.3" cy="5.0" r="1.15" fill="#a3a5a7"/><path d="M10.6 7.8L9.5 15.2" stroke="#a3a5a7" stroke-width="1.8"/><path d="M8.1 7.8H11.2M8.0 15.2H11.0" stroke="#a3a5a7" stroke-width="1.1"/></svg><div class="b" style="left:588.0px;top:920.8px;width:46.4px;height:46.4px;background:#0a7bff;border-radius:50%;box-shadow:0 0 0 1px rgba(255,255,255,0.6)"></div><div class="t" style="left:588.0px;top:920.8px;width:46.4px;height:46.4px;line-height:46.4px;text-align:center;font-size:34px;font-weight:700;color:#fff">4</div><div class="b" style="left:869.6px;top:936.6px;width:109.8px;height:35.4px;background:#ea6b6c;border-radius:4px"></div><div class="b" style="left:875.6px;top:942.0px;width:32.4px;height:24.3px;background:#fff;border-radius:4px"></div><div class="t" style="left:925.50px;top:946.6px;font-size:15.5px;font-weight:700;color:#fff;letter-spacing:-0.065px;">HIDE</div><div class="t" style="left:436.00px;top:1039.8px;font-size:19.8px;font-weight:700;color:#1d2327;letter-spacing:-0.124px;">Form Message Template</div><svg class="b" style="left:682.6px;top:1039.3px;" width="20.0" height="20.0" viewBox="0 0 20 20"><circle cx="10" cy="10" r="8.4" fill="none" stroke="#a3a5a7" stroke-width="1.7"/><circle cx="10.3" cy="5.0" r="1.15" fill="#a3a5a7"/><path d="M10.6 7.8L9.5 15.2" stroke="#a3a5a7" stroke-width="1.8"/><path d="M8.1 7.8H11.2M8.0 15.2H11.0" stroke="#a3a5a7" stroke-width="1.1"/></svg><div class="b" style="left:708.8px;top:1017.2px;width:46.4px;height:46.4px;background:#0a7bff;border-radius:50%;box-shadow:0 0 0 1px rgba(255,255,255,0.6)"></div><div class="t" style="left:708.8px;top:1017.2px;width:46.4px;height:46.4px;line-height:46.4px;text-align:center;font-size:34px;font-weight:700;color:#fff">5</div><div class="b" style="left:870.0px;top:1033.4px;width:1594.5px;height:195.3px;border:1.4px solid #8c8f94;border-radius:5px;background:#fff"></div><div class="t" style="left:879.50px;top:1040.7px;font-size:19.8px;font-weight:400;color:#2c3338;letter-spacing:0.284px;">Hello!</div><div class="t" style="left:879.50px;top:1067.9px;font-size:19.8px;font-weight:400;color:#2c3338;letter-spacing:0.212px;">I’d like to get in touch regarding {currentTitle}.</div><div class="t" style="left:879.50px;top:1095.4px;font-size:19.8px;font-weight:400;color:#2c3338;letter-spacing:0.053px;">Here are my details:</div><div class="t" style="left:880.50px;top:1122.6px;font-size:19.8px;font-weight:400;color:#2c3338;letter-spacing:-0.227px;">{form_fields}  {PRODUCT_START}</div><div class="t" style="left:879.50px;top:1150.1px;font-size:19.8px;font-weight:400;color:#2c3338;letter-spacing:0.252px;">Product: {productName}</div><div class="t" style="left:879.50px;top:1177.3px;font-size:19.8px;font-weight:400;color:#2c3338;letter-spacing:-0.151px;">Price: {productPrice}{PRODUCT_END}</div><svg class="b" style="left:2452.0px;top:1216.0px;" width="10.0" height="10.0" viewBox="0 0 10 10"><path d="M9 1L1 9M9 5.5L5.5 9" stroke="#777" stroke-width="1.1"/></svg><div class="t" style="left:870.60px;top:1246.6px;font-size:18.5px;font-weight:400;color:#8c8f94;letter-spacing:0.159px;">All Fields: {form_fields}</div><div class="t" style="left:869.60px;top:1272.0px;font-size:18.5px;font-weight:400;color:#8c8f94;letter-spacing:-0.116px;">Name: {text_1}</div><div class="t" style="left:869.60px;top:1297.1px;font-size:18.5px;font-weight:400;color:#8c8f94;letter-spacing:0.108px;">Message: {textarea_2}</div><div class="t" style="left:870.60px;top:1321.8px;font-size:18.5px;font-weight:400;color:#8c8f94;letter-spacing:0.111px;">Global Vars: {siteTitle}, {siteEmail}, {currentURL}, {currentTitle}, {siteURL}, {ip}, {date}</div><div class="t" style="left:870.60px;top:1347.3px;font-size:18.5px;font-weight:400;color:#8c8f94;letter-spacing:0.060px;">{PRODUCT_START} WooCommerce Vars: {productName}, {productSlug}, {productSku}, {productPrice}, {productRegularPrice}, {productSalePrice}, {productStockStatus} {PRODUCT_END}</div><div class="t" style="left:870.60px;top:1371.9px;font-size:18.5px;font-weight:700;color:#8c8f94;letter-spacing:-0.363px;">Conditional Blocks:</div><div class="t" style="left:1042.30px;top:1371.9px;font-size:18.5px;font-weight:400;color:#8c8f94;letter-spacing:-0.494px;">{PRODUCT_START} ... {PRODUCT_END}, {NOT_PRODUCT_START} ... {NOT_PRODUCT_END}, {LOGGEDIN_START} ... {LOGGEDIN_END}, {NOT_LOGGEDIN_START} ...</div><div class="t" style="left:870.60px;top:1397.3px;font-size:18.5px;font-weight:400;color:#8c8f94;letter-spacing:-0.654px;">{NOT_LOGGEDIN_END}</div><div class="b" style="left:406.5px;top:1448.3px;width:2088.5px;height:85.3px;background:#f0f0f0"></div><div class="t" style="left:437.40px;top:1478.6px;font-size:28px;font-weight:700;color:#1d2327;letter-spacing:-0.902px;">Availability</div><div class="t" style="left:437.00px;top:1570.8px;font-size:19.8px;font-weight:700;color:#1d2327;letter-spacing:-0.210px;">Timezone</div><svg class="b" style="left:546.8px;top:1571.0px;" width="20.0" height="20.0" viewBox="0 0 20 20"><circle cx="10" cy="10" r="8.4" fill="none" stroke="#a3a5a7" stroke-width="1.7"/><circle cx="10.3" cy="5.0" r="1.15" fill="#a3a5a7"/><path d="M10.6 7.8L9.5 15.2" stroke="#a3a5a7" stroke-width="1.8"/><path d="M8.1 7.8H11.2M8.0 15.2H11.0" stroke="#a3a5a7" stroke-width="1.1"/></svg><div class="b" style="left:576.4px;top:1555.8px;width:46.4px;height:46.4px;background:#0a7bff;border-radius:50%;box-shadow:0 0 0 1px rgba(255,255,255,0.6)"></div><div class="t" style="left:576.4px;top:1555.8px;width:46.4px;height:46.4px;line-height:46.4px;text-align:center;font-size:34px;font-weight:700;color:#fff">6</div><div class="b" style="left:870.0px;top:1565.0px;width:411.6px;height:37.6px;border:1.4px solid #a8a8a8;border-radius:6px;background:linear-gradient(#fff 0%,#fafafa 42%,#efefef 56%,#f1f1f1 100%)"></div><div class="t" style="left:883.30px;top:1575.4px;font-size:18.8px;font-weight:400;color:#7b7b7b;letter-spacing:-0.103px;">Select Timezone</div><svg class="b" style="left:1260.0px;top:1579.0px;" width="12.0" height="9.0" viewBox="0 0 12 9"><path d="M1.5 1.8l4.5 4.5 4.5-4.5" fill="none" stroke="#a3a3a3" stroke-width="2.1" stroke-linecap="round" stroke-linejoin="round"/></svg><div class="t" style="left:437.00px;top:1672.8px;font-size:19.8px;font-weight:700;color:#1d2327;letter-spacing:-0.355px;">Availability</div><svg class="b" style="left:557.2px;top:1672.5px;" width="20.0" height="20.0" viewBox="0 0 20 20"><circle cx="10" cy="10" r="8.4" fill="none" stroke="#a3a5a7" stroke-width="1.7"/><circle cx="10.3" cy="5.0" r="1.15" fill="#a3a5a7"/><path d="M10.6 7.8L9.5 15.2" stroke="#a3a5a7" stroke-width="1.8"/><path d="M8.1 7.8H11.2M8.0 15.2H11.0" stroke="#a3a5a7" stroke-width="1.1"/></svg><div class="b" style="left:590.2px;top:1657.6px;width:46.4px;height:46.4px;background:#0a7bff;border-radius:50%;box-shadow:0 0 0 1px rgba(255,255,255,0.6)"></div><div class="t" style="left:590.2px;top:1657.6px;width:46.4px;height:46.4px;line-height:46.4px;text-align:center;font-size:34px;font-weight:700;color:#fff">7</div><div class="b" style="left:870.2px;top:1727.2px;width:1594.4px;height:84.0px;border:1.5px solid #aad6cd"></div><div class="b" style="left:870.2px;top:1668.3px;width:108.6px;height:60.5px;background:#fff;border:1.5px solid #aad6cd;border-bottom:none"></div><div class="t" style="left:892.50px;top:1688.8px;font-size:19px;font-weight:700;color:#3c434a;letter-spacing:-1.032px;">Sunday</div><div class="b" style="left:986.0px;top:1668.3px;width:112.0px;height:59.7px;background:#ebfcf8;border:1.5px solid #aad6cd"></div><div class="t" style="left:1007.50px;top:1688.8px;font-size:19px;font-weight:700;color:#3c434a;letter-spacing:-0.662px;">Monday</div><div class="b" style="left:1105.7px;top:1668.3px;width:116.3px;height:59.7px;background:#ebfcf8;border:1.5px solid #aad6cd"></div><div class="t" style="left:1128.50px;top:1688.8px;font-size:19px;font-weight:700;color:#3c434a;letter-spacing:-0.768px;">Tuesday</div><div class="b" style="left:1230.2px;top:1668.3px;width:144.4px;height:59.7px;background:#ebfcf8;border:1.5px solid #aad6cd"></div><div class="t" style="left:1252.60px;top:1688.8px;font-size:19px;font-weight:700;color:#3c434a;letter-spacing:-0.747px;">Wednesday</div><div class="b" style="left:1382.0px;top:1668.3px;width:124.0px;height:59.7px;background:#ebfcf8;border:1.5px solid #aad6cd"></div><div class="t" style="left:1404.30px;top:1688.8px;font-size:19px;font-weight:700;color:#3c434a;letter-spacing:-0.822px;">Thursday</div><div class="b" style="left:1513.8px;top:1668.3px;width:97.6px;height:59.7px;background:#ebfcf8;border:1.5px solid #aad6cd"></div><div class="t" style="left:1535.00px;top:1688.8px;font-size:19px;font-weight:700;color:#3c434a;letter-spacing:-0.690px;">Friday</div><div class="b" style="left:1619.0px;top:1668.3px;width:121.8px;height:59.7px;background:#ebfcf8;border:1.5px solid #aad6cd"></div><div class="t" style="left:1641.00px;top:1688.8px;font-size:19px;font-weight:700;color:#3c434a;letter-spacing:-0.620px;">Saturday</div><div class="t" style="left:891.50px;top:1761.3px;font-size:18.5px;font-weight:400;color:#3c434a;letter-spacing:-0.083px;">From</div><div class="b" style="left:939.7px;top:1748.9px;width:238.0px;height:40.6px;border:1.4px solid #8c8f94;border-radius:5px;background:#fff"></div><div class="t" style="left:1188.70px;top:1761.3px;font-size:18.5px;font-weight:400;color:#3c434a;letter-spacing:-0.150px;">To</div><div class="b" style="left:1214.0px;top:1748.9px;width:238.0px;height:40.6px;border:1.4px solid #8c8f94;border-radius:5px;background:#fff"></div>
</body></html>
